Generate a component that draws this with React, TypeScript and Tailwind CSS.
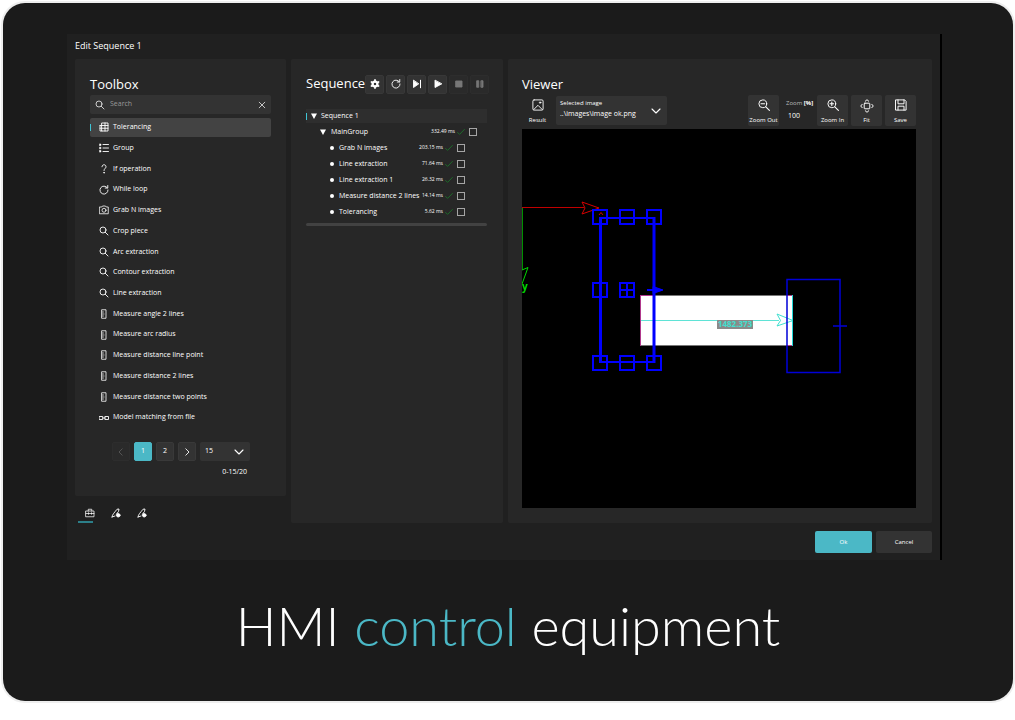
import { useState } from 'react';
import type { ReactNode } from 'react';
import clsx from 'clsx';

type IconProps = { className?: string };

const Svg = ({ className = 'w-2.5 h-2.5', children }: { className?: string; children: ReactNode }) => (
  <svg
    viewBox="0 0 20 20"
    className={clsx('shrink-0', className)}
    fill="none"
    stroke="currentColor"
    strokeWidth="1.8"
    strokeLinecap="round"
    strokeLinejoin="round"
    aria-hidden="true"
  >
    {children}
  </svg>
);

const SearchIcon = ({ className }: IconProps) => (
  <Svg className={className}>
    <circle cx="8" cy="8" r="6" />
    <path d="M12.5 12.5 18 18" />
  </Svg>
);

const TableIcon = ({ className }: IconProps) => (
  <Svg className={className}>
    <path d="M6 2h12v16H6zM2 7v11h4M2 7h16M2 12.5h16M12 2v16" />
  </Svg>
);

const GroupIcon = ({ className }: IconProps) => (
  <Svg className={className}>
    <path d="M8 3h11M8 10h11M8 17h11" />
    <path d="M1 2h3v3H1zM1 8.5h3v3H1zM1 15h3v3H1z" fill="currentColor" strokeWidth="1" />
  </Svg>
);

const QuestionIcon = ({ className }: IconProps) => (
  <Svg className={className}>
    <path d="M6 5.5C6 3 8 1.500 10 1.500s4 1.500 4 4c0 3.500-4 3.500-4 7.500" />
    <circle cx="10" cy="17.5" r="0.6" fill="currentColor" />
  </Svg>
);

const LoopIcon = ({ className }: IconProps) => (
  <Svg className={className}>
    <path d="M16.5 5.500A8 8 0 1 0 18 10M17.500 1v5h-5" />
  </Svg>
);

const CameraIcon = ({ className }: IconProps) => (
  <Svg className={className}>
    <path d="M1.500 4h4L7 2h6l1.500 2h4v13.500h-17z" strokeWidth="1.600" />
    <circle cx="10" cy="10.500" r="4" strokeWidth="1.600" />
  </Svg>
);

const RulerIcon = ({ className }: IconProps) => (
  <Svg className={className}>
    <path d="M6 1.500h8v17H6z" strokeWidth="1.600" />
    <path d="M6.500 6H9M6.500 10h3.500M6.500 14H9" strokeWidth="1.400" />
  </Svg>
);

const MatchIcon = ({ className }: IconProps) => (
  <Svg className={className}>
    <path d="M1 7h6.500v6H1zM12.500 7H19v6h-6.500zM7.500 10h5" />
  </Svg>
);

const GearIcon = ({ className }: IconProps) => (
  <Svg className={className}>
    <circle cx="10" cy="10" r="4.800" strokeWidth="4.500" />
    <path d="M10 1.800v16.400M2.900 5.900l14.200 8.200M17.100 5.900 2.900 14.100" strokeWidth="3.500" strokeDasharray="3 10.400" />
  </Svg>
);

const StepIcon = ({ className }: IconProps) => (
  <Svg className={className}>
    <path d="M3 3v14l10-7z" fill="currentColor" />
    <path d="M17 2.500v15" strokeWidth="2" />
  </Svg>
);

const PlayIcon = ({ className }: IconProps) => (
  <Svg className={className}>
    <path d="M4 3v14l13-7z" fill="currentColor" />
  </Svg>
);

const StopIcon = ({ className }: IconProps) => (
  <Svg className={className}>
    <path d="M4 4h12v12H4z" fill="currentColor" />
  </Svg>
);

const PauseIcon = ({ className }: IconProps) => (
  <Svg className={className}>
    <path d="M4 3.500h3.500v13H4zM12.500 3.500H16v13h-3.500z" fill="currentColor" />
  </Svg>
);

const CloseIcon = ({ className }: IconProps) => (
  <Svg className={className}>
    <path d="M3 3l14 14M17 3 3 17" />
  </Svg>
);

const ChevronIcon = ({ className, d = 'M2 6l8 8 8-8' }: IconProps & { d?: string }) => (
  <Svg className={className}>
    <path d={d} strokeWidth="2.200" />
  </Svg>
);

const ToolboxIcon = ({ className }: IconProps) => (
  <Svg className={className}>
    <path d="M2 6h16v11.500H2zM6.500 6V2.500h7V6M2 11h16M7 9.500v3M13 9.500v3" strokeWidth="1.500" />
  </Svg>
);

const PenIcon = ({ className }: IconProps) => (
  <Svg className={className}>
    <path d="M2 18c0-5 6-10 10-15.500L16 2l-1 5-4 5M2 18l6-2" />
    <circle cx="14.5" cy="14.5" r="3.5" fill="currentColor" />
  </Svg>
);

const ImageIcon = ({ className }: IconProps) => (
  <Svg className={className}>
    <rect x="1.500" y="1.500" width="17" height="17" rx="2" strokeWidth="1.500" />
    <path d="M3 17.500l7-7 7 7" strokeWidth="1.500" />
    <circle cx="13.500" cy="6" r="1.200" strokeWidth="1.500" />
  </Svg>
);

const ZoomIcon = ({ className, plus }: IconProps & { plus?: boolean }) => (
  <Svg className={className}>
    <circle cx="8" cy="8" r="6.500" strokeWidth="1.600" />
    <path d={plus ? 'M5 8h6M8 5v6M13 13l6 6' : 'M5 8h6M13 13l6 6'} />
  </Svg>
);

const FitIcon = ({ className }: IconProps) => (
  <Svg className={className}>
    <rect x="6" y="6" width="8" height="8" rx="1" strokeWidth="1.400" />
    <path d="M7.500 3.200 10 1l2.500 2.200M7.500 16.800 10 19l2.500-2.200M3.200 7.500 1 10l2.200 2.500M16.800 7.500 19 10l-2.200 2.500" strokeWidth="1.400" />
  </Svg>
);

const SaveIcon = ({ className }: IconProps) => (
  <Svg className={className}>
    <path d="M1.500 1.500H16L18.500 4v14.500h-17zM5 1.500V8h10V1.500M5 18.500V12h10v6.500" strokeWidth="1.600" />
  </Svg>
);

const CheckIcon = ({ className }: IconProps) => (
  <Svg className={className}>
    <path d="M1.500 11l5 5L18.500 3.500" strokeWidth="2.500" />
  </Svg>
);

const tools = [
  { label: 'Tolerancing', icon: TableIcon },
  { label: 'Group', icon: GroupIcon },
  { label: 'If operation', icon: QuestionIcon },
  { label: 'While loop', icon: LoopIcon },
  { label: 'Grab N images', icon: CameraIcon },
  { label: 'Crop piece', icon: SearchIcon },
  { label: 'Arc extraction', icon: SearchIcon },
  { label: 'Contour extraction', icon: SearchIcon },
  { label: 'Line extraction', icon: SearchIcon },
  { label: 'Measure angle 2 lines', icon: RulerIcon },
  { label: 'Measure arc radius', icon: RulerIcon },
  { label: 'Measure distance line point', icon: RulerIcon },
  { label: 'Measure distance 2 lines', icon: RulerIcon },
  { label: 'Measure distance two points', icon: RulerIcon },
  { label: 'Model matching from file', icon: MatchIcon },
];

const steps = [
  { label: 'Grab N images', time: '203.15 ms' },
  { label: 'Line extraction', time: '71.64 ms' },
  { label: 'Line extraction 1', time: '26.32 ms' },
  { label: 'Measure distance 2 lines', time: '14.14 ms' },
  { label: 'Tolerancing', time: '5.62 ms' },
];

const controls = [
  { label: 'Settings', icon: GearIcon },
  { label: 'Reload', icon: LoopIcon },
  { label: 'Step', icon: StepIcon },
  { label: 'Play', icon: PlayIcon },
  { label: 'Stop', icon: StopIcon, disabled: true },
  { label: 'Pause', icon: PauseIcon, disabled: true },
];

const tabs = [
  { label: 'Tools', icon: ToolboxIcon },
  { label: 'Draw inputs', icon: PenIcon },
  { label: 'Draw outputs', icon: PenIcon },
];

const Toolbox = () => {
  const [active, setActive] = useState('Tolerancing');
  const [query, setQuery] = useState('');
  const [tab, setTab] = useState('Tools');

  const pageButton = 'flex items-center justify-center w-[18px] h-[19px] rounded-xs border';

  return (
    <div className="flex flex-col">
      <section className="bg-[#272727] rounded-xs pt-3.5 px-[15px] pb-[17px]">
        <h2 className="h-[22px] leading-[22px] text-[13px]">Toolbox</h2>

        <div className="flex items-center h-[19px] px-[5px] bg-[#333333] rounded-xs">
          <SearchIcon className="w-2.5 h-2.5 text-[#dddddd]" />
          <input
            type="text"
            aria-label="Search"
            placeholder="Search"
            value={query}
            onChange={(e) => setQuery(e.target.value)}
            className="flex-1 min-w-0 pl-[5px] text-[7px] outline-none placeholder:text-[#999999]"
          />
          <button aria-label="Clear search" onClick={() => setQuery('')}>
            <CloseIcon className="w-2 h-2" />
          </button>
        </div>

        <ul className="mt-[3px] h-[311px] grid auto-rows-fr">
          {tools.map(({ label, icon: Icon }) => (
            <li key={label} className="flex items-center">
              <button
                onClick={() => setActive(label)}
                className={clsx(
                  'flex items-center w-full h-[19px] rounded-xs text-[7px]',
                  active === label && 'bg-[#434343]'
                )}
              >
                <span className={clsx('w-px h-[7px] mr-2', active === label && 'bg-[#3fc4d4]')} />
                <Icon className="w-2.5 h-2.5 mr-1" />
                {label}
              </button>
            </li>
          ))}
        </ul>

        <div className="mt-3.5 pl-[22px] flex gap-1 text-[7px]">
          <button aria-label="Previous page" disabled className={clsx(pageButton, 'bg-[#2a2a2a] border-[#2d2d2d] text-[#5a5a5a]')}>
            <ChevronIcon className="w-2 h-2" d="M13 2 5 10l8 8" />
          </button>
          <button className={clsx(pageButton, 'bg-[#4bb8c6] border-[#4bb8c6]')}>1</button>
          <button className={clsx(pageButton, 'bg-[#333333] border-[#393939]')}>2</button>
          <button aria-label="Next page" className={clsx(pageButton, 'bg-[#333333] border-[#393939]')}>
            <ChevronIcon className="w-2 h-2" d="M7 2l8 8-8 8" />
          </button>
          <div className="relative w-[50px] h-[19px]">
            <select aria-label="Items per page" className="appearance-none w-full h-full pl-[5px] bg-[#333333] rounded-xs">
              <option>15</option>
              <option>20</option>
            </select>
            <ChevronIcon className="absolute right-1.5 top-[5px] w-2.5 h-2.5 pointer-events-none" />
          </div>
        </div>
        <p className="mt-1 pr-6 h-3.5 leading-[14px] text-right text-[7px]">0-15/20</p>
      </section>

      <nav className="flex h-[27px] pl-[3px] gap-[11px]">
        {tabs.map(({ label, icon: Icon }) => (
          <button
            key={label}
            aria-label={label}
            onClick={() => setTab(label)}
            className={clsx(
              'w-[15px] pt-2 pl-2 flex items-center justify-center border-b-2',
              tab === label ? 'border-[#2c7f89]' : 'border-transparent'
            )}
          >
            <Icon className="w-2.5 h-2.5" />
          </button>
        ))}
      </nav>
    </div>
  );
};

const StepResult = ({ label, time }: { label: string; time: string }) => (
  <>
    <span className="text-[5px]">{time}</span>
    <CheckIcon className="w-2 h-2 ml-0.5 text-[#1d6b29]" />
    <input
      type="checkbox"
      aria-label={label}
      className="appearance-none w-2 h-2 ml-1 shrink-0 border border-[#a5a5a5] checked:bg-[#4bb8c6]"
    />
  </>
);

const Caret = () => (
  <svg viewBox="0 0 6 6" className="w-1.5 h-1.5 shrink-0" fill="currentColor" aria-hidden="true">
    <path d="M0 .5h6L3 6z" />
  </svg>
);

const Sequence = () => (
  <section className="bg-[#272727] rounded-xs pt-3.5 pl-[15px] pr-4">
    <div className="flex items-center justify-between h-[22px]">
      <h2 className="text-[13px]">Sequence</h2>
      <div className="flex gap-0.5">
        {controls.map(({ label, icon: Icon, disabled }) => (
          <button
            key={label}
            aria-label={label}
            disabled={disabled}
            className={clsx(
              'flex items-center justify-center w-[19px] h-[19px] rounded-xs border',
              disabled ? 'bg-[#2a2a2a] border-[#2d2d2d] text-[#777777]' : 'bg-[#333333] border-[#383838]'
            )}
          >
            <Icon className="w-2.5 h-2.5" />
          </button>
        ))}
      </div>
    </div>

    <ul className="mt-3.5 text-[7px] whitespace-nowrap">
      <li>
        <div className="flex items-center h-3.5 my-px bg-[#2e2e2e]">
          <span className="w-px h-[7px] mr-1 bg-[#3fc4d4]" />
          <Caret />
          <span className="ml-1">Sequence 1</span>
        </div>
        <ul>
          <li>
            <div className="flex items-center h-4 pl-3.5 pr-2.5">
              <Caret />
              <span className="flex-1 min-w-0 ml-[5px]">MainGroup</span>
              <StepResult label="MainGroup" time="332.49 ms" />
            </div>
            <ul>
              {steps.map((step) => (
                <li key={step.label} className="flex items-center h-4 pl-6 pr-[22px]">
                  <span className="w-1 h-1 rounded-full bg-white" />
                  <span className="flex-1 min-w-0 ml-[5px]">{step.label}</span>
                  <StepResult label={step.label} time={step.time} />
                </li>
              ))}
            </ul>
          </li>
        </ul>
      </li>
    </ul>
    <div className="mt-[3px] h-[3px] rounded-full bg-[#424242]" />
  </section>
);

const handles = [
  [78, 88], [105, 88], [132, 88],
  [78, 161], [105, 161],
  [78, 234], [105, 234], [132, 234],
];

const Canvas = () => (
  <svg viewBox="0 0 394 379" className="block w-full mt-[3px] bg-black" fill="none" role="img" aria-label="Measurement result">
    <rect x="118.5" y="166.5" width="152" height="50" fill="#ffffff" stroke="#777777" />
    <path d="M118.5 166v51M118 166.5h14M265 166.5h6M265 216.5h6" stroke="#b0388c" />
    <path d="M119 191.5h138" stroke="#5fe3d6" />
    <path d="M255 185l16 6.500L255 197l3.500-5.500z" stroke="#40e0d0" />
    <path d="M270.5 166v51" stroke="#20d8d8" />
    <rect x="195" y="191" width="36" height="9" fill="#8a8a8a" />
    <text x="213" y="198" textAnchor="middle" fill="#40e0d0" className="text-[8px] font-bold">
      1482.373
    </text>

    <path d="M0 78.5h62" stroke="#c00000" />
    <path d="M60 73l17 6-17 6 3-6z" stroke="#d40000" />
    <path d="M77 86l2-2.500 2 2.500" stroke="#d40000" />
    <path d="M.5 79v62" stroke="#009000" />
    <path d="M0 141l6-2.500L0 155" stroke="#00d800" />
    <text x="0" y="161" fill="#00d800" className="text-[10px] font-bold">
      y
    </text>

    <g stroke="#0000ff">
      <path d="M77 89h56M77 233h56" strokeWidth="2" />
      <path d="M78.5 88v146M132 88v146" strokeWidth="3" />
      {handles.map(([x, y]) => (
        <rect key={`${x}-${y}`} x={x - 7} y={y - 7} width="14" height="14" strokeWidth="2" />
      ))}
      <path d="M105 155v12M99 161h12M125 161h15" strokeWidth="2" />
      <path d="M131 157.500l10 3.500-10 3.500z" fill="#0000ff" strokeWidth="1" />
    </g>
    <g stroke="#0000d8">
      <path d="M265 150.5h53v93h-53z" strokeWidth="1.5" />
      <path d="M311 197h14" strokeWidth="1.5" />
    </g>
  </svg>
);

const toolButton = 'flex flex-col items-center justify-between w-[31px] h-[31px] pt-1 pb-0.5 rounded-xs bg-[#333333]';

const Viewer = () => (
  <section className="bg-[#272727] rounded-xs pt-3.5 pl-3.5 pr-4 pb-[15px] min-w-0">
    <h2 className="h-[22px] leading-[22px] text-[13px]">Viewer</h2>
    <div className="flex items-center text-[6px] leading-2 whitespace-nowrap">
      <button className="flex flex-col items-center justify-between w-[31px] h-[31px] pt-1 pb-0.5">
        <ImageIcon className="w-3 h-3" />
        Result
      </button>
      <div className="relative w-[111px] ml-[3px] pl-1 pt-[3px] pb-1 bg-[#333333] rounded-xs">
        <label htmlFor="selected-image" className="block">Selected image</label>
        <select id="selected-image" className="appearance-none block w-full h-3.5 text-[7px]">
          <option>..\images\image ok.png</option>
        </select>
        <ChevronIcon className="absolute right-1.5 top-2.5 w-2.5 h-2.5 pointer-events-none" />
      </div>
      <div className="flex ml-auto gap-[3px]">
        <button className={toolButton}>
          <ZoomIcon className="w-3 h-3" />
          Zoom Out
        </button>
        <div className="w-8 pl-1 pt-1">
          <label htmlFor="zoom" className="block text-[#bbbbbb]">
            Zoom <b className="text-white">[%]</b>
          </label>
          <input id="zoom" type="text" defaultValue="100" className="w-full h-4 pl-0.5 text-[7px] outline-none" />
        </div>
        <button className={toolButton}>
          <ZoomIcon className="w-3 h-3" plus />
          Zoom In
        </button>
        <button className={toolButton}>
          <FitIcon className="w-3.5 h-3.5" />
          Fit
        </button>
        <button className={toolButton}>
          <SaveIcon className="w-3 h-3" />
          Save
        </button>
      </div>
    </div>
    <Canvas />
  </section>
);

export default function App() {
  return (
    <div className="bg-white p-[3px] pr-0.5">
      <div className="bg-[#1b1b1b] rounded-[22px] ring-2 ring-[#eeeeee] pt-[31px] pb-10">
        <main className="ml-16 mr-[71px] px-2 pb-[7px] bg-[#202020] border-r-2 border-black text-white font-['Open_Sans','Noto_Sans',sans-serif]">
          <h1 className="h-[25px] leading-6 text-[9px]">Edit Sequence 1</h1>
          <div className="grid grid-cols-[211px_212px_minmax(0,1fr)] gap-[5px]">
            <Toolbox />
            <Sequence />
            <Viewer />
          </div>
          <div className="flex justify-end gap-1 mt-2 text-[6px]">
            <button className="w-[57px] h-[22px] rounded-xs bg-[#4bb8c6]">Ok</button>
            <button className="w-14 h-[22px] rounded-xs bg-[#333333]">Cancel</button>
          </div>
        </main>
        <p className="mt-[33px] h-[68px] leading-[66px] text-center text-[54px] font-light text-white font-['Lato',sans-serif]">
          HMI <span className="text-[#4bb8c6]">control</span> equipment
        </p>
      </div>
    </div>
  );
}
